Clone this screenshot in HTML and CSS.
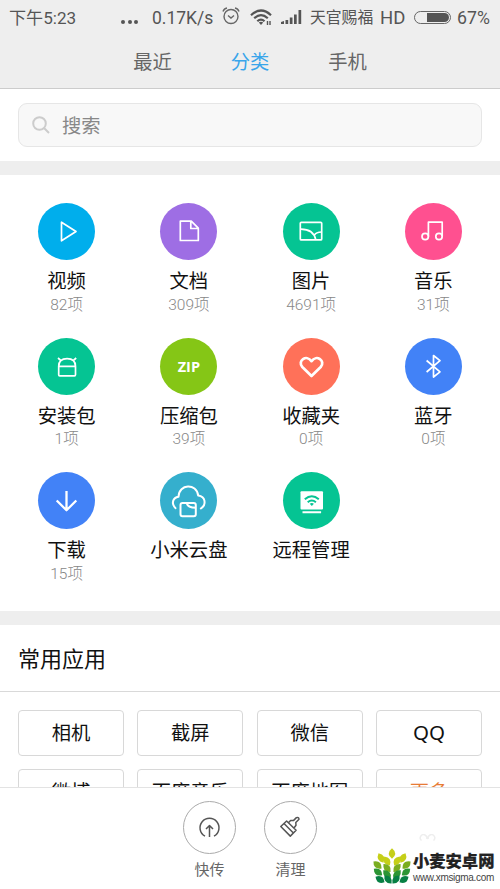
FILE: index.html
```html
<!DOCTYPE html>
<html lang="zh-CN">
<head>
<meta charset="utf-8">
<title>文件管理</title>
<link rel="stylesheet" href="styles.css">
</head>
<body>
<div class="screen">
  <header class="top">
    <div class="status">
      <span class="time">下午5:23</span>
      <span class="dots"><i></i><i></i><i></i></span>
      <span class="speed">0.17K/s</span>
      <svg class="alarm" width="18" height="18" viewBox="0 0 18 18"><circle cx="9" cy="9.5" r="7"/><path d="M6 8.5l3 2.5 3-2.5M1 4.5Q2 1.5 5 1M17 4.5Q16 1.5 13 1"/></svg>
      <svg class="wifi" width="22" height="17" viewBox="0 0 22 17"><path d="M1 6.2Q11 -3.2 21 6.2M4.2 9.3Q11 3 17.8 9.3M7.3 12.3Q11 8.8 14.5 12.3"/><path class="fill" d="M8.8 13.5Q11 12 13.2 13.5L11 16z"/><path class="thin" d="M17.5 12v4M20 12v4"/></svg>
      <svg class="signal" width="21" height="15" viewBox="0 0 21 15"><path d="M0 15v-2l3-1v3zM4.5 15v-4h2.7v4zM8.8 15V8.5h2.7V15zM13 15V5.5h2.7V15zM17.5 15V1h2.7v14z"/></svg>
      <span class="carrier">天官赐福</span>
      <span class="hd">HD</span>
      <span class="battery"><i></i></span>
      <span class="percent">67%</span>
    </div>
    <nav class="tabs"><span>最近</span><span class="active">分类</span><span>手机</span></nav>
  </header>

  <section class="search-wrap">
    <div class="search">
      <svg width="18" height="18" viewBox="0 0 18 18"><circle cx="7.5" cy="7.5" r="6.3"/><path d="M12 12l5 5"/></svg>
      <span>搜索</span>
    </div>
  </section>

  <main class="grid">
    <div class="item"><svg class="icon sky" viewBox="0 0 57 57"><path d="M23.5 19.2v18.6L38 28.5z"/></svg><b>视频</b><small>82项</small></div>
    <div class="item"><svg class="icon purple" viewBox="0 0 57 57"><path d="M20.3 18.2h11l7 7v12.3h-18zM30.8 18.2v7.3h7.5"/></svg><b>文档</b><small>309项</small></div>
    <div class="item"><svg class="icon green" viewBox="0 0 57 57"><rect x="17.3" y="19.3" width="21.4" height="17.6" rx="1"/><path d="M17.3 26.2Q30.5 26 32.8 36.9M31.4 32.2Q33 29 38.7 29"/></svg><b>图片</b><small>4691项</small></div>
    <div class="item"><svg class="icon pink" viewBox="0 0 57 57"><circle cx="20.2" cy="33.5" r="3.2"/><circle cx="34" cy="33.5" r="3.2"/><path d="M23.4 33.5V19.2H37.2v14.3"/></svg><b>音乐</b><small>31项</small></div>

    <div class="item"><svg class="icon green" viewBox="0 0 57 57"><path d="M20.7 28.4v8.4q0 1 1 1h14.8q1 0 1-1v-8.4zM20.7 28.4q0-7.8 8.4-7.8t8.4 7.8M23.4 23l-3.4-3M34.8 23l3.4-3"/></svg><b>安装包</b><small>1项</small></div>
    <div class="item"><span class="icon lime">ZIP</span><b>压缩包</b><small>39项</small></div>
    <div class="item"><svg class="icon coral" viewBox="0 0 57 57"><path d="M28.5 38L19.3 29C14 23 23.5 16 28.5 23.2C33.5 16 43 23 37.7 29z"/></svg><b>收藏夹</b><small>0项</small></div>
    <div class="item"><svg class="icon blue" viewBox="0 0 57 57"><path d="M21.6 22.5L35 33.8 28.5 39V17.5L35 22.7 21.6 34"/></svg><b>蓝牙</b><small>0项</small></div>

    <div class="item"><svg class="icon blue arrow" viewBox="0 0 57 57"><path d="M28.5 19v19M18.7 28.5l9.8 9.7 9.8-9.7"/></svg><b>下载</b><small>15项</small></div>
    <div class="item"><svg class="icon cyan" viewBox="0 0 57 57"><path d="M15.5 36.2C10.8 31 13 25.7 18.5 24.8C19 11.5 36.5 11 38.2 23.5C45.5 24.5 46.8 32.5 40.8 36.5"/><path d="M22.5 31h11.3q2 0 2 2v9.3q0 2-2 2H22.5q-2 0-2-2V33q0-2 2-2zM26.5 31Q28 35.8 35.8 35.8"/></svg><b>小米云盘</b></div>
    <div class="item"><svg class="icon green" viewBox="0 0 57 57"><rect class="solid" x="17.5" y="19.2" width="22.5" height="18.4" rx="1"/><path class="solid" d="M19.5 39.2h18.6v2H19.5z"/><path class="cut" d="M21.8 27.2Q28.8 21.2 35.8 27.2M24.7 30.2Q28.8 26.8 32.9 30.2"/><path class="cutfill" d="M26.7 31.7q2.1-1.2 4.2 0l-2.1 2.3z"/></svg><b>远程管理</b></div>
  </main>

  <section class="apps">
    <h2>常用应用</h2>
    <div class="buttons">
      <span>相机</span><span>截屏</span><span>微信</span><span class="qq">QQ</span>
      <span>微博</span><span>百度音乐</span><span>百度地图</span><span class="more">更多</span>
    </div>
  </section>

  <footer class="bottom">
    <div class="action"><svg viewBox="0 0 53 53"><circle class="ring" cx="26.5" cy="26.5" r="26"/><path d="M22 35.2A9.5 9.5 0 1 1 31 35.2M26.5 36V24.5M23 28l3.5-3.5L30 28"/></svg><span>快传</span></div>
    <div class="action"><svg viewBox="0 0 53 53"><circle class="ring" cx="26.5" cy="26.5" r="26"/><path d="M16.8 25.5l5.8-5.5 9.5 9.3-5.8 5.8zM20 22.5l9.4 9.5M24.4 21.7l2.2-2.3 2.8.2 3-3q2.3-.8 2.6 1.6l-3.2 3.4.2 2.7-2 2.7"/></svg><span>清理</span></div>
  </footer>

  <div class="mark">
    <svg class="loop" width="18" height="7" viewBox="0 0 18 7"><path d="M2.5 6.5a3.3 3.3 0 1 1 5.2-1.5M9.3 5a3.3 3.3 0 1 1 5.2 1.5"/></svg>
    <svg class="wheat" width="38" height="36" viewBox="0 0 38 36">
      <defs><path id="leaf" d="M0 5.3Q-6.4 0 0-5.3Q6.4 0 0 5.3z"/></defs>
      <g fill="#c5cf18"><use href="#leaf" transform="translate(19 5.5)"/><use href="#leaf" transform="translate(8 10) rotate(-28)"/><use href="#leaf" transform="translate(30 10) rotate(28)"/><use href="#leaf" transform="translate(14 13) rotate(-32)"/><use href="#leaf" transform="translate(24 13) rotate(32)"/></g>
      <g fill="#7aad20"><use href="#leaf" transform="translate(4.5 17) rotate(-50)"/><use href="#leaf" transform="translate(33.5 17) rotate(50)"/><use href="#leaf" transform="translate(14 20) rotate(-42)"/><use href="#leaf" transform="translate(24 20) rotate(42)"/></g>
      <g fill="#2c9534"><use href="#leaf" transform="translate(5 24) rotate(-52)"/><use href="#leaf" transform="translate(33 24) rotate(52)"/><use href="#leaf" transform="translate(14 26) rotate(-45)"/><use href="#leaf" transform="translate(24 26) rotate(45)"/></g>
      <g fill="#078044"><use href="#leaf" transform="translate(7 31.5) rotate(-58)"/><use href="#leaf" transform="translate(31 31.5) rotate(58)"/><use href="#leaf" transform="translate(15 31.5) rotate(-42)"/><use href="#leaf" transform="translate(23 31.5) rotate(42)"/></g>
    </svg>
    <div class="mark-text"><strong>小麦安卓网</strong><span>www.xmsigma.com</span></div>
  </div>
</div>
</body>
</html>
```

FILE: styles.css
```css
* { box-sizing: border-box; }
body { margin: 0; background: #fff; font-family: "Noto Sans CJK SC", sans-serif; color: #111; }
.screen { position: relative; width: 500px; height: 889px; overflow: hidden; display: flex; flex-direction: column; }
svg { fill: none; flex: none; display: block; }

.top { height: 89px; flex: none; background: #eee; border-bottom: 1px solid #ccc; }
.status { height: 36px; padding: 0 8px 0 9px; display: flex; align-items: center; color: #555; font-size: 17px; line-height: 24px; white-space: nowrap; font-family: Roboto, "Noto Sans CJK SC", sans-serif; }
.time { width: 112px; font-size: 17.1px; }
.dots { width: 31px; display: flex; gap: 2.5px; padding-top: 7px; }
.dots i { width: 4px; height: 4px; border-radius: 50%; background: #555; }
.speed { width: 70px; font-size: 17.5px; }
.alarm { stroke: #666; stroke-width: 1.4; margin: -4px 10px 0 0; }
.wifi { stroke: #555; stroke-width: 2.2; margin: -2px 9px 0 0; }
.wifi .fill { fill: #555; stroke: none; }
.wifi .thin { stroke-width: 1.4; }
.signal { fill: #555; margin: -3px 8px 0 0; }
.carrier { width: 70px; font-size: 15.8px; }
.hd { width: 34px; font-size: 18.5px; }
.battery { width: 37px; height: 13px; border: 1.5px solid #666; border-radius: 7px; padding: 1px 1px 1px 12px; margin: -2px 6px 0 0; flex: none; }
.battery i { display: block; height: 100%; background: #555; border-radius: 0 5px 5px 0; }
.percent { font-size: 17.7px; }
.tabs { display: flex; justify-content: center; gap: 59px; height: 50px; line-height: 51px; font-size: 19.3px; color: #666; }
.tabs .active { color: #39a5ea; }

.search-wrap { height: 72px; flex: none; padding: 14px 18px; }
.search { height: 44px; border: 1px solid #e6e6e6; border-radius: 9px; background: #f8f8f8; display: flex; align-items: center; padding-left: 13px; gap: 12px; font-size: 19.3px; line-height: 28px; color: #888; }
.search svg { stroke: #ccc; stroke-width: 2; }

.grid { height: 464px; flex: none; border: solid #eee; border-width: 14px 0; padding: 28px 5.5px 0; display: grid; grid-template-columns: repeat(4, 1fr); grid-auto-rows: 134.7px; align-content: start; }
.item { display: flex; flex-direction: column; align-items: center; white-space: nowrap; }
.item b { font-size: 19.3px; font-weight: 400; line-height: 28px; margin-top: 6px; }
.item small { font: 300 15.5px/20px Roboto, "Noto Sans CJK SC", sans-serif; color: #888; margin-top: .6px; }
.icon { width: 57px; height: 57px; border-radius: 50%; flex: none; stroke: #fff; stroke-width: 1.7; stroke-linejoin: round; }
.sky { background: #00aeec; }
.purple { background: #9e6ee4; }
.green { background: #05c493; }
.pink { background: #ff5090; }
.lime { background: #85c616; color: #fff; font: bold 14.5px/57px "Open Sans", sans-serif; text-align: center; }
.coral { background: #ff7159; stroke-width: 2.7; }
.blue { background: #4282f7; }
.arrow { stroke-width: 2.3; }
.cyan { background: #35afcd; stroke-width: 2; stroke-linecap: round; }
.solid { fill: #fff; stroke: none; }
.cut { stroke: #05c493; stroke-width: 2; }
.cutfill { fill: #05c493; stroke: none; }

.apps { flex: none; }
.apps h2 { margin: 0; height: 67px; border-bottom: 1px solid #d9d9d9; padding-left: 18px; font-size: 22px; font-weight: 400; line-height: 65px; }
.buttons { display: grid; grid-template-columns: repeat(4, 1fr); grid-auto-rows: 46px; gap: 13.3px 13.5px; padding: 18px 18px 0; text-align: center; font-size: 19.3px; line-height: 43px; }
.buttons span { border: 1px solid #d8d8d8; border-radius: 4px; }
.buttons .qq { font-family: "Noto Sans", sans-serif; font-size: 20.5px; line-height: 43px; }
.buttons .more { color: #e77b35; }

.bottom { position: absolute; inset: auto 0 0; height: 102px; background: #fff; border-top: 1px solid #e3e3e3; display: flex; justify-content: center; gap: 28px; padding-top: 13px; }
.action { width: 53px; display: flex; flex-direction: column; align-items: center; font-size: 15px; line-height: 22px; color: #666; gap: 4px; }
.action svg { width: 53px; height: 53px; stroke: #555; stroke-width: 1.5; stroke-linejoin: round; }
.action .ring { stroke: #aaa; stroke-width: 1; }

.mark { position: absolute; left: 373px; top: 848px; display: flex; gap: 3px; }
.mark .loop { position: absolute; left: 46px; top: -14px; stroke: #eee; stroke-width: 1.5; }
.mark-text { display: flex; flex-direction: column; width: 84px; white-space: nowrap; }
.mark-text strong { font-size: 16.3px; font-weight: 900; line-height: 24px; margin-left: -1px; color: #222; -webkit-text-stroke: .2px #222; }
.mark-text span { font: 10px/12px "Liberation Sans", sans-serif; letter-spacing: -.3px; margin-left: -1px; color: #444; }
```
